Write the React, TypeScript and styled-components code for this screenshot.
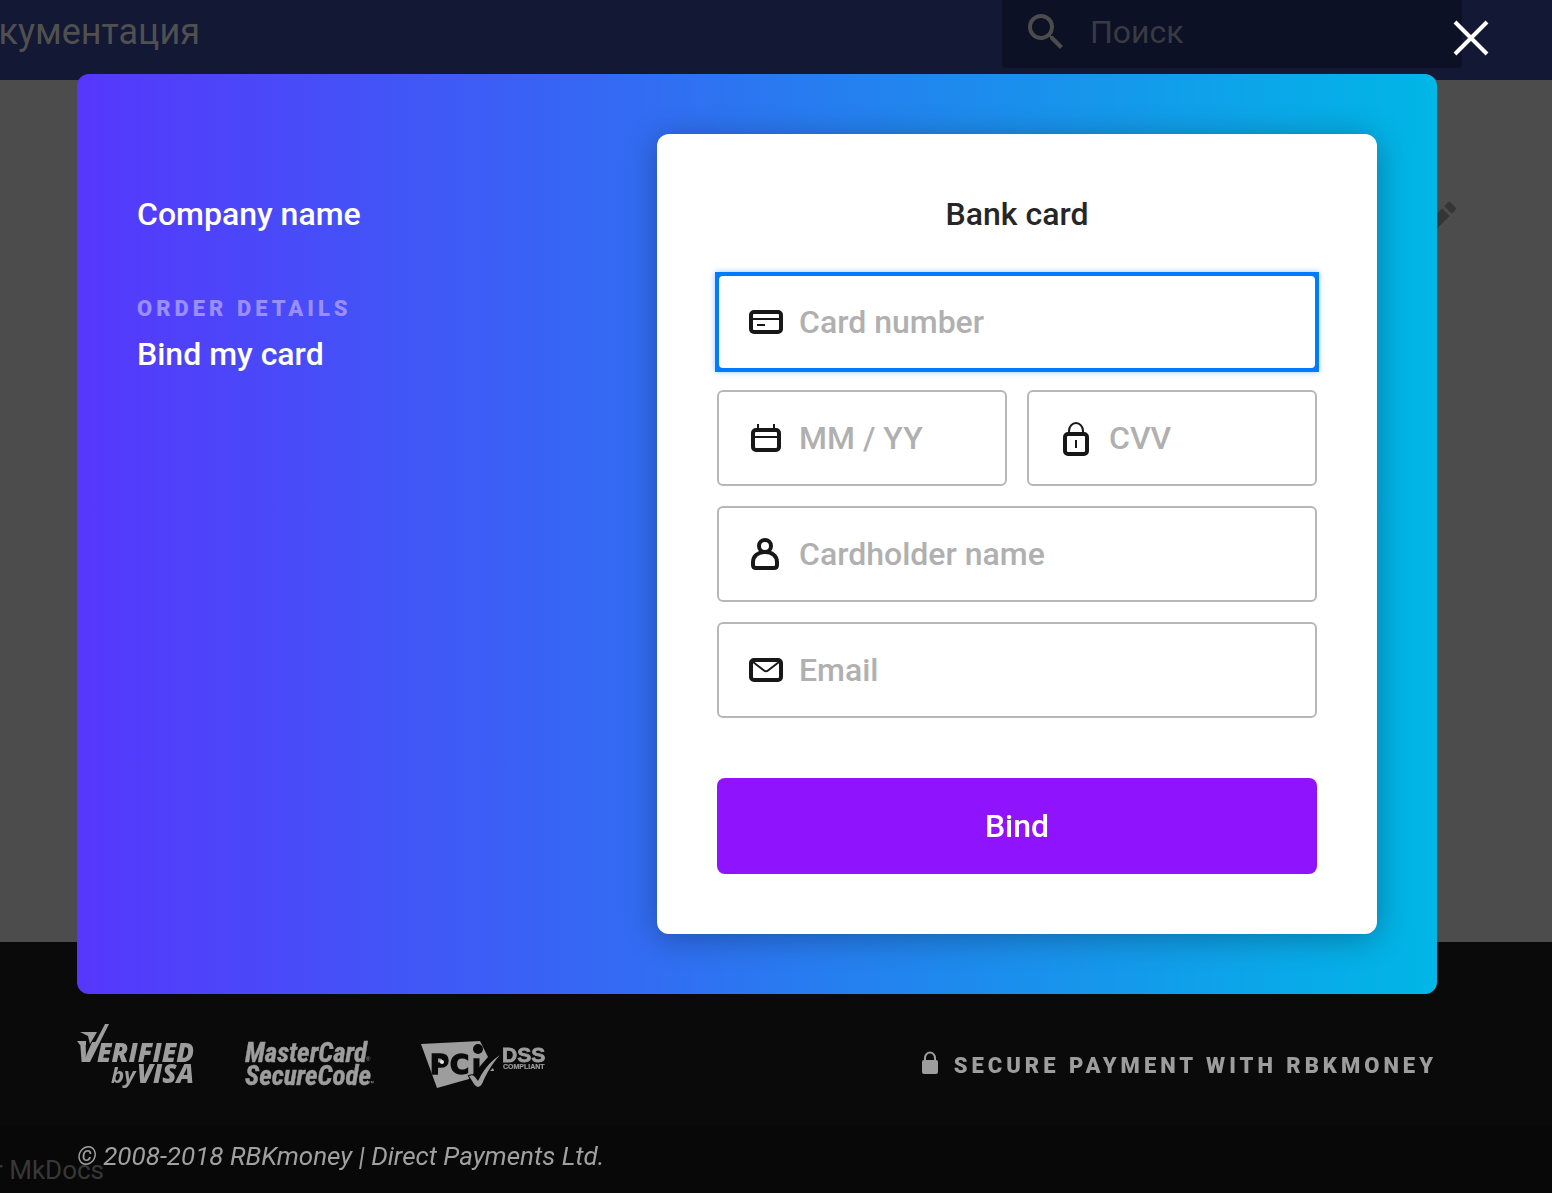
import React, { useState } from 'react';
import styled, { createGlobalStyle } from 'styled-components';
import { MdEdit, MdSearch } from 'react-icons/md';

const GlobalStyle = createGlobalStyle`
  * { box-sizing: border-box; }
  html, body, #root { height: 100%; }
  body {
    margin: 0;
    overflow: hidden;
    font-family: Roboto, "Liberation Sans", sans-serif;
    color: #262626;
  }
  button, input { font: inherit; }
`;

/* Documentation page behind the dialog */

const Page = styled.div`
  display: flex;
  flex-direction: column;
  min-height: 100%;
  background: #4c4c4c;
`;

const SiteHeader = styled.header`
  display: flex;
  justify-content: space-between;
  height: 80px;
  padding-right: 90px;
  background: #131834;
`;

const SiteTitle = styled.div`
  display: flex;
  justify-content: flex-end;
  width: 200px;
  overflow: hidden;
  font-size: 36px;
  line-height: 64px;
  font-weight: 400;
  white-space: nowrap;
  color: #505050;
`;

const SearchBox = styled.label`
  display: flex;
  align-items: center;
  gap: 20px;
  width: 460px;
  height: 68px;
  padding: 0 20px 4px;
  border-radius: 0 0 4px 4px;
  background: #0d1126;
  color: #4c4c4c;
`;

const SearchInput = styled.input`
  flex: 1;
  min-width: 0;
  padding: 0;
  border: 0;
  outline: 0;
  background: transparent;
  font-size: 32px;
  line-height: 40px;
  color: #393b45;
  &::placeholder { color: #393b42; opacity: 1; }
`;

const SiteMain = styled.main`
  display: flex;
  flex: 1;
  justify-content: flex-end;
  align-items: flex-start;
  padding: 116px 90px 0 0;
  color: #353535;
`;

const SiteFooter = styled.footer`
  background: #0a0a0a;
`;

const FooterNav = styled.div`
  height: 184px;
`;

const FooterMeta = styled.div`
  height: 67px;
  padding-top: 28px;
  background: #080808;
`;

const Generator = styled.div`
  display: flex;
  justify-content: flex-end;
  width: 104px;
  overflow: hidden;
  font-size: 26px;
  line-height: 32px;
  white-space: nowrap;
  color: #383838;
`;

/* Payment dialog */

const Overlay = styled.div`
  position: fixed;
  inset: 0;
  display: flex;
  justify-content: center;
  padding: 74px 115px 0 77px;
`;

const Dialog = styled.div`
  position: relative;
  width: 100%;
  max-width: 1360px;
`;

const CloseButton = styled.button`
  position: absolute;
  top: -54px;
  right: -52px;
  display: flex;
  padding: 0;
  border: 0;
  background: none;
  color: #fff;
  cursor: pointer;
`;

const Panel = styled.section`
  display: flex;
  justify-content: space-between;
  padding: 60px;
  border-radius: 12px;
  background: linear-gradient(90deg, #5637fc, #00b7e6);
`;

const Summary = styled.div`
  padding-top: 60px;
  color: #fff;
`;

const CompanyName = styled.h1`
  margin: 0 0 64px;
  font-size: 32px;
  line-height: 40px;
  font-weight: 500;
`;

const Caps = styled.div`
  font-size: 22px;
  line-height: 22px;
  font-weight: 900;
  letter-spacing: 4px;
  text-transform: uppercase;
`;

const SummaryLabel = styled(Caps)`
  margin-bottom: 14px;
  color: #9a8eff;
`;

const Product = styled.div`
  font-size: 32px;
  line-height: 40px;
  font-weight: 500;
`;

const FormCard = styled.form`
  width: 720px;
  padding: 60px;
  border-radius: 12px;
  background: #fff;
  box-shadow: 0 4px 32px rgba(0, 0, 0, 0.3);
`;

const FormTitle = styled.h2`
  margin: 0 0 40px;
  font-size: 32px;
  line-height: 40px;
  font-weight: 500;
  text-align: center;
`;

const Fields = styled.div`
  display: grid;
  grid-template-columns: repeat(2, minmax(0, 1fr));
  gap: 20px;
  margin-bottom: 60px;
`;

const FieldFrame = styled.div<{ $wide?: boolean; $active: boolean }>`
  grid-column: ${(p) => (p.$wide ? '1 / -1' : 'auto')};
  background: ${(p) => (p.$active ? '#007aff' : 'none')};
  box-shadow: ${(p) => (p.$active ? '0 0 0 2px #007aff, 0 0 6px 2px rgba(0, 122, 255, 0.4)' : 'none')};
`;

const FieldBox = styled.label<{ $active: boolean }>`
  display: flex;
  align-items: center;
  gap: 14px;
  height: 96px;
  padding: 0 28px;
  border: 2px solid ${(p) => (p.$active ? '#007aff' : '#b7b7b7')};
  border-radius: 6px;
  background: #fff;
`;

const FieldInput = styled.input`
  flex: 1;
  min-width: 0;
  padding: 0;
  border: 0;
  outline: 0;
  background: transparent;
  font-size: 32px;
  line-height: 40px;
  font-weight: 500;
  color: #262626;
  &::placeholder { color: #b0b0b0; opacity: 1; }
`;

const SubmitButton = styled.button`
  display: block;
  width: 100%;
  height: 96px;
  border: 0;
  border-radius: 8px;
  background: #8f13fd;
  color: #fff;
  font-size: 32px;
  font-weight: 500;
  cursor: pointer;
`;

const TrustRow = styled.div`
  display: flex;
  justify-content: space-between;
  align-items: center;
  height: 64px;
  margin-top: 30px;
  color: #9d9d9d;
`;

const Logos = styled.div`
  display: flex;
  gap: 48px;
  svg { overflow: visible; }
`;

const Secure = styled.div`
  display: flex;
  align-items: flex-end;
  gap: 16px;
  padding-top: 16px;
`;

const Copyright = styled.p`
  margin: 52px 0 0;
  font-size: 26px;
  line-height: 32px;
  font-style: italic;
  font-weight: 400;
  color: #a0a0a0;
`;

const IconFrame = ({ children }: { children: React.ReactNode }) => (
  <svg width="38" height="40" viewBox="0 0 38 40" fill="none" stroke="#171717" aria-hidden="true">
    {children}
  </svg>
);

const CardIcon = () => (
  <IconFrame>
    <rect x="4" y="10" width="30" height="20" rx="3" strokeWidth="4" />
    <path d="M5 17h28M10 23h8" strokeWidth="2" />
  </IconFrame>
);

const CalendarIcon = () => (
  <IconFrame>
    <rect x="6" y="12" width="26" height="20" rx="3" strokeWidth="4" />
    <path d="M7 19h24M11 6v6M27 6v6" strokeWidth="2" />
  </IconFrame>
);

const LockIcon = () => (
  <IconFrame>
    <rect x="8" y="16" width="22" height="20" rx="3" strokeWidth="4" />
    <path d="M12 15v-2a7 8 0 0 1 14 0v2M19 22v8" strokeWidth="2" />
  </IconFrame>
);

const PersonIcon = () => (
  <IconFrame>
    <ellipse cx="18" cy="12" rx="6" ry="6" strokeWidth="4" />
    <path d="M6 31v-3c0-6 5-10 12-10s12 4 12 10v3q0 3-3 3H9q-3 0-3-3z" strokeWidth="4" />
  </IconFrame>
);

const MailIcon = () => (
  <IconFrame>
    <rect x="4" y="10" width="30" height="20" rx="3" strokeWidth="4" />
    <path d="M6 12l11 8.500q2 1.500 4 0L32 12" strokeWidth="2" />
  </IconFrame>
);

const SmallLockIcon = () => (
  <svg width="16" height="26" viewBox="0 0 16 26" aria-hidden="true">
    <path d="M3 10V7a5 5.500 0 0 1 10 0v3" fill="none" stroke="currentColor" strokeWidth="2" />
    <rect y="9" width="16" height="14" rx="2" fill="currentColor" />
  </svg>
);

const VerifiedByVisaLogo = () => (
  <svg width="120" height="64" viewBox="0 0 120 64" fill="currentColor" role="img" aria-label="Verified by Visa">
    <g fontFamily="Open Sans" fontStyle="italic" fontWeight="800">
      <text x="1" y="38" fontSize="29">V</text>
      <text x="20" y="38" fontSize="26">ERIFIED</text>
      <text x="34" y="59" fontSize="22" fontWeight="700">by</text>
      <text x="60" y="59" fontSize="26">VISA</text>
    </g>
    <path d="M0 17h9v4H3z" />
    <path d="M28 0h4L13 38H8z" />
    <path d="M3 8h17l-7 12-2-8z" stroke="#0a0a0a" strokeWidth="1" paintOrder="stroke" />
  </svg>
);

const SecureCodeLogo = () => (
  <svg width="128" height="64" viewBox="0 0 128 64" fill="currentColor" role="img" aria-label="MasterCard SecureCode">
    <g
      fontFamily="Roboto Condensed, Liberation Sans Narrow, Open Sans"
      fontStyle="italic"
      fontWeight="700"
      stroke="currentColor"
      strokeWidth="0.4"
    >
      <text x="0" y="38" fontSize="27">MasterCard</text>
      <text x="0" y="61" fontSize="27">SecureCode</text>
    </g>
    <g fontFamily="Liberation Sans" fontSize="6">
      <text x="121" y="37">®</text>
      <text x="123" y="61">™</text>
    </g>
  </svg>
);

const PciLogo = () => (
  <svg width="128" height="64" viewBox="0 0 128 64" fill="currentColor" role="img" aria-label="PCI DSS compliant">
    <path d="M0 20L59 17l8 16-19 22-32 9z" />
    <circle cx="57" cy="25" r="5" fill="#0a0a0a" />
    <g
      fill="#0a0a0a"
      stroke="#0a0a0a"
      strokeWidth="1.5"
      fontFamily="DejaVu Sans"
      fontWeight="700"
      fontSize="26"
    >
      <text x="9" y="50">P</text>
      <text x="29" y="50">C</text>
      <text x="51" y="50">ı</text>
    </g>
    <circle cx="21" cy="38" r="2" fill="#e6e6e6" />
    <path
      d="M48 52q4-2 6 1l3 4q8-17 22-26-11 12-18 29-4 6-8 0z"
      stroke="#0a0a0a"
      strokeWidth="2"
      paintOrder="stroke"
    />
    <path d="M69 47l4 0-1-3z" />
    <g fontFamily="Liberation Sans" fontWeight="700" stroke="currentColor">
      <text x="81" y="38" fontSize="21" strokeWidth="0.8">DSS</text>
      <text x="82" y="45" fontSize="7" strokeWidth="0.2">COMPLIANT</text>
    </g>
  </svg>
);

type FieldProps = {
  name: string;
  label: string;
  type?: string;
  wide?: boolean;
  icon: React.ReactNode;
  active: boolean;
  onActivate: (name: string) => void;
};

const Field = ({ name, label, type = 'text', wide, icon, active, onActivate }: FieldProps) => (
  <FieldFrame $wide={wide} $active={active}>
    <FieldBox $active={active} htmlFor={name}>
      {icon}
      <FieldInput
        id={name}
        name={name}
        type={type}
        placeholder={label}
        aria-label={label}
        onFocus={() => onActivate(name)}
      />
    </FieldBox>
  </FieldFrame>
);

const FIELDS = [
  { name: 'number', label: 'Card number', wide: true, icon: <CardIcon /> },
  { name: 'expiry', label: 'MM / YY', icon: <CalendarIcon /> },
  { name: 'cvv', label: 'CVV', icon: <LockIcon /> },
  { name: 'holder', label: 'Cardholder name', wide: true, icon: <PersonIcon /> },
  { name: 'email', label: 'Email', type: 'email', wide: true, icon: <MailIcon /> },
];

export default function App() {
  const [active, setActive] = useState('number');

  return (
    <>
      <GlobalStyle />
      <Page>
        <SiteHeader>
          <SiteTitle>кументация</SiteTitle>
          <SearchBox>
            <MdSearch size={48} />
            <SearchInput type="text" placeholder="Поиск" aria-label="Поиск" />
          </SearchBox>
        </SiteHeader>
        <SiteMain>
          <MdEdit size={48} />
        </SiteMain>
        <SiteFooter>
          <FooterNav />
          <FooterMeta>
            <Generator>r MkDocs</Generator>
          </FooterMeta>
        </SiteFooter>
      </Page>

      <Overlay>
        <Dialog role="dialog" aria-label="Bank card">
          <CloseButton type="button" aria-label="Close">
            <svg width="36" height="36" viewBox="0 0 36 36" stroke="currentColor" strokeWidth="4">
              <path d="M2 2l32 32M34 2L2 34" />
            </svg>
          </CloseButton>
          <Panel>
            <Summary>
              <CompanyName>Company name</CompanyName>
              <SummaryLabel>Order details</SummaryLabel>
              <Product>Bind my card</Product>
            </Summary>
            <FormCard onSubmit={(e) => e.preventDefault()}>
              <FormTitle>Bank card</FormTitle>
              <Fields>
                {FIELDS.map((f) => (
                  <Field key={f.name} {...f} active={active === f.name} onActivate={setActive} />
                ))}
              </Fields>
              <SubmitButton type="submit">Bind</SubmitButton>
            </FormCard>
          </Panel>
          <TrustRow>
            <Logos>
              <VerifiedByVisaLogo />
              <SecureCodeLogo />
              <PciLogo />
            </Logos>
            <Secure>
              <SmallLockIcon />
              <Caps>Secure payment with RBKmoney</Caps>
            </Secure>
          </TrustRow>
          <Copyright>© 2008-2018 RBKmoney | Direct Payments Ltd.</Copyright>
        </Dialog>
      </Overlay>
    </>
  );
}
